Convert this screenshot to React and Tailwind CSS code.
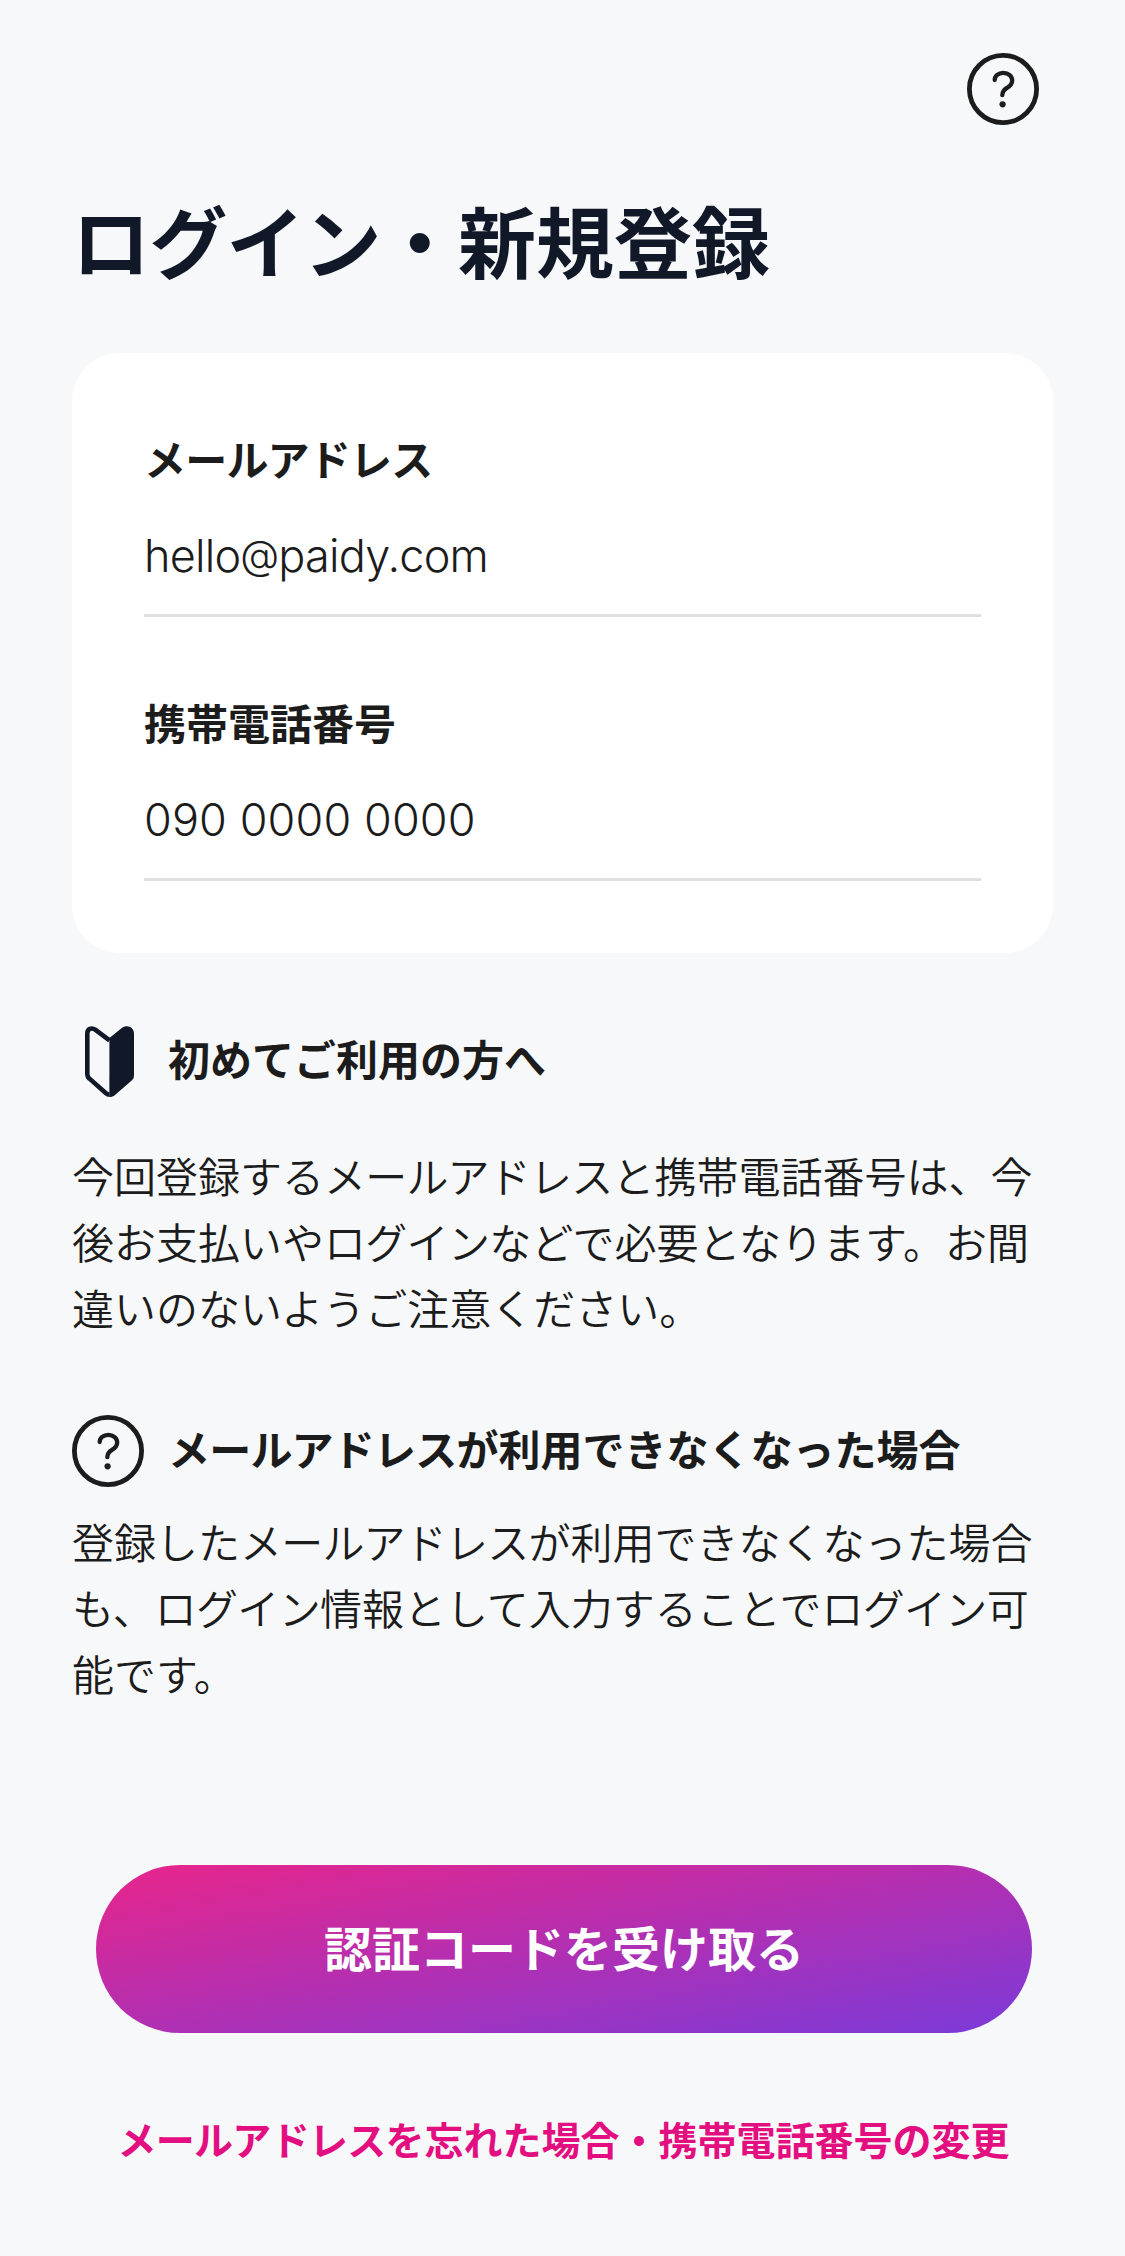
import React from "react";

function HelpIcon() {
  return (
    <svg className="block size-[72px] shrink-0" viewBox="0 0 72 72" fill="none" stroke="#1c1c1c">
      <circle cx="36" cy="36" r="33.6" strokeWidth="4.8" />
      <path
        d="M27.7 27C27.7 23 31.3 19.9 36.3 19.9C41.5 19.9 45.2 23.2 45.2 27.4C45.2 31 43 33 40 34.8C37 36.6 35.3 38.8 35.3 42.2"
        strokeWidth="4.3"
        strokeLinecap="round"
      />
      <circle cx="35.6" cy="51.3" r="3.1" fill="#1c1c1c" stroke="none" />
    </svg>
  );
}

function BeginnerIcon() {
  return (
    <svg className="block size-[72px] shrink-0" viewBox="0 0 72 72">
      <path
        d="M37.5 15.4L23.2 4.6C19.6 2.2 15.3 3.8 15.3 8.4V49.2C15.3 51 15.9 52.3 17.2 53.4L34 68.3C35 69.2 36.2 69.7 37.5 69.7"
        fill="none"
        stroke="#111827"
        strokeWidth="4.6"
        strokeLinejoin="round"
      />
      <path
        d="M37.4 12.9L49.5 3.2C55.5-1.4 62 2.4 62 8.5V50C62 52.5 61.3 54 59.4 55.7L43 70C41.3 71.4 39.6 72 37.4 72Z"
        fill="#111827"
      />
    </svg>
  );
}

function Field({ label, children }) {
  return (
    <div className="h-[192px] border-b-[3px] border-[#e0e0e0]">
      <div className="h-[72px] text-[42px] leading-[66px] font-bold">{label}</div>
      <div className="h-[117px] font-[Inter] text-[45px] leading-[118px] font-[350]">{children}</div>
    </div>
  );
}

/* "メールアドレス" set slightly tighter than full width */
function MailAddress() {
  return <span className="tracking-[-0.8px]">メールアドレス</span>;
}

function Login() {
  return <span className="tracking-[-0.7px]">ログイン</span>;
}

export default function App() {
  return (
    <main
      lang="ja"
      className="h-[2256px] w-[1125px] overflow-hidden bg-[#f7f8fa] px-[72px] pt-[53px] font-['Noto_Sans_CJK_JP',sans-serif] text-[#1c1c1c]"
    >
      <header className="flex justify-end pr-[13.7px]">
        <HelpIcon />
      </header>

      <h1 className="mt-[54px] h-[120px] text-[78px] leading-[120px] font-bold whitespace-nowrap text-[#111827]">
        <span className="tracking-[-0.8px]">ログイン・</span>新規登録
      </h1>

      <section className="mt-[54px] flex h-[600px] flex-col gap-[72px] rounded-[48px] bg-white p-[72px]">
        <Field label={<MailAddress />}>
          <span className="tracking-[-0.8px]">
            hello<span className="align-[3px] text-[40px] leading-none">@</span>paidy.com
          </span>
        </Field>
        <Field label="携帯電話番号">
          <span className="tracking-[0.1px]">090 0000 0000</span>
        </Field>
      </section>

      <section className="mt-[72px]">
        <div className="flex items-center gap-6">
          <BeginnerIcon />
          <h2 className="pb-1.5 text-[42px] leading-[66px] font-bold">初めてご利用の方へ</h2>
        </div>
        <p className="mt-[45px] text-[42px] leading-[66px] font-[350] whitespace-nowrap">
          今回登録する<MailAddress />と携帯電話番号は、今
          <br />
          後お支払いや<Login />などで必要となります。お間
          <br />
          違いのないようご注意ください。
        </p>
      </section>

      <section className="mt-[75px]">
        <div className="flex items-center gap-6">
          <HelpIcon />
          <h2 className="pb-1.5 text-[42px] leading-[66px] font-bold whitespace-nowrap">
            <MailAddress />が利用できなくなった場合
          </h2>
        </div>
        <p className="mt-[21px] text-[42px] leading-[66px] font-[350] whitespace-nowrap">
          登録した<MailAddress />が利用できなくなった場合
          <br />
          も、<Login />情報として入力することで<Login />可
          <br />
          能です。
        </p>
      </section>

      <div className="mt-[159px] flex flex-col items-center">
        <button className="ml-[3px] h-[168px] w-[936px] rounded-full bg-linear-to-br/srgb from-[#e8258b] to-[#7b3ad9] pb-1.5 text-[48px] font-bold text-white">
          認証コードを受け取る
        </button>
        <a className="mt-[69px] ml-[2px] text-[39px] leading-[72px] font-bold whitespace-nowrap text-[#e30e80]">
          <span className="tracking-[-0.7px]">メールアドレス</span>を忘れた場合・携帯電話番号の変更
        </a>
      </div>
    </main>
  );
}
